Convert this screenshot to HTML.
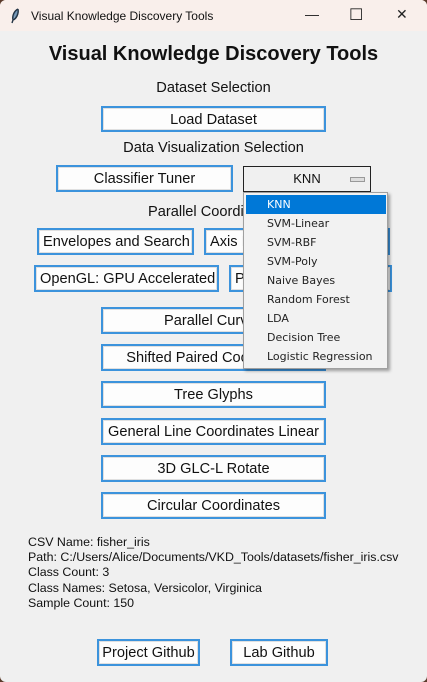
<!DOCTYPE html>
<html><head><meta charset="utf-8"><style>
*{margin:0;padding:0;box-sizing:border-box}
body{width:427px;height:682px;background:#5a3a2a;font-family:"Liberation Sans",Arial,sans-serif;position:relative;overflow:hidden}
.win{position:absolute;left:0;top:0;width:427px;height:682px;background:#f0f0f0;border-radius:6px;overflow:hidden}
.tb{position:absolute;left:0;top:0;width:427px;height:31px;background:#f9efeb}
.tb .t{position:absolute;left:31px;top:9px;font-size:12px;color:#111}
.tb .ic{position:absolute;font-size:14px;color:#222}
.a{position:absolute}
.lbl{position:absolute;font-size:14.6px;color:#111;white-space:nowrap}
.btn{position:absolute;background:#fdfdfd;border:2px solid #3c93dc;box-shadow:inset 0 0 0 1px #e0e0e0;font-size:14.6px;color:#111;white-space:nowrap;overflow:hidden;display:flex;align-items:center;justify-content:center;padding-top:1px}
.btn.l{justify-content:flex-start;padding-left:4px}
.info{position:absolute;left:28px;top:535px;font-size:12.4px;line-height:15.2px;color:#111}
.dd{position:absolute;left:243px;top:192px;width:145px;height:177px;background:#f2f2f2;border:1px solid #a0a0a0;box-shadow:2px 2px 3px rgba(0,0,0,.35);font-family:"DejaVu Sans",sans-serif;font-size:11px;color:#222}
.dd div{position:absolute;left:23px;height:19px;line-height:19px}
</style></head><body>
<div class="win">
<div class="tb">
<svg class="a" style="left:10px;top:8px" width="10" height="16" viewBox="0 0 10 16"><path d="M8 1 C4 3 2 8 3 12 L2 15 M8 1 C9 6 6 11 3 12" stroke="#234" stroke-width="1.4" fill="#6a8fb0"/></svg>
<div class="t">Visual Knowledge Discovery Tools</div>
<div class="ic" style="left:305px;top:6px">—</div>
<div class="ic" style="left:349px;top:5px;font-size:16px">☐</div>
<div class="ic" style="left:396px;top:6px">✕</div>
</div>
<div class="lbl" style="left:0;width:427px;text-align:center;top:43px;font-size:20px;font-weight:bold">Visual Knowledge Discovery Tools</div>
<div class="lbl" style="left:0;width:427px;text-align:center;top:80px">Dataset Selection</div>
<div class="btn" style="left:101px;top:106px;width:225px;height:26px">Load Dataset</div>
<div class="lbl" style="left:0;width:427px;text-align:center;top:140px">Data Visualization Selection</div>
<div class="btn" style="left:56px;top:165px;width:177px;height:27px">Classifier Tuner</div>
<div class="a" style="left:243px;top:166px;width:128px;height:26px;border:1px solid #222;background:#f0f0f0;font-size:13px;text-align:center;line-height:24px;color:#111">KNN<span class="a" style="left:106px;top:10px;width:15px;height:5px;background:#ddd;border:1px solid #999"></span></div>
<div class="lbl" style="left:148px;top:204px">Parallel Coordinates</div>
<div class="btn l" style="left:37px;top:228px;width:157px;height:27px">Envelopes and Search</div>
<div class="btn l" style="left:204px;top:228px;width:186px;height:27px">Axis Inversion</div>
<div class="btn l" style="left:34px;top:265px;width:185px;height:27px">OpenGL: GPU Accelerated</div>
<div class="btn l" style="left:229px;top:265px;width:163px;height:27px">Pygame</div>
<div class="btn" style="left:101px;top:307px;width:225px;height:27px">Parallel Curves</div>
<div class="btn" style="left:101px;top:344px;width:225px;height:27px">Shifted Paired Coordinates</div>
<div class="btn" style="left:101px;top:381px;width:225px;height:27px">Tree Glyphs</div>
<div class="btn" style="left:101px;top:418px;width:225px;height:27px">General Line Coordinates Linear</div>
<div class="btn" style="left:101px;top:455px;width:225px;height:27px">3D GLC-L Rotate</div>
<div class="btn" style="left:101px;top:492px;width:225px;height:27px">Circular Coordinates</div>
<div class="info">CSV Name: fisher_iris<br>Path: C:/Users/Alice/Documents/VKD_Tools/datasets/fisher_iris.csv<br>Class Count: 3<br>Class Names: Setosa, Versicolor, Virginica<br>Sample Count: 150</div>
<div class="btn" style="left:97px;top:639px;width:103px;height:27px">Project Github</div>
<div class="btn" style="left:230px;top:639px;width:98px;height:27px">Lab Github</div>
<div class="dd">
<span class="a" style="left:2px;top:2px;width:140px;height:19px;background:#0078d7"></span>
<div style="top:2px;color:#fff">KNN</div>
<div style="top:21px">SVM-Linear</div>
<div style="top:40px">SVM-RBF</div>
<div style="top:59px">SVM-Poly</div>
<div style="top:78px">Naive Bayes</div>
<div style="top:97px">Random Forest</div>
<div style="top:116px">LDA</div>
<div style="top:135px">Decision Tree</div>
<div style="top:154px">Logistic Regression</div>
</div>
</div>
</body></html>
